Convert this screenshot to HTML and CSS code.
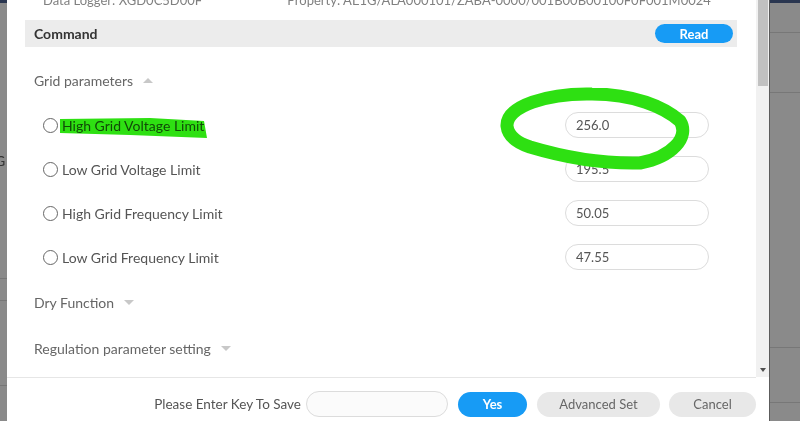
FILE: index.html
```html
<!DOCTYPE html>
<html lang="en">
<head>
  <meta charset="UTF-8" />
  <title>Command</title>
  <link rel="stylesheet" href="styles.css">
</head>
<body>

<div class="screen">
  <div class="shade shade-left">
    <div class="shade-top"></div>
    <div class="shade-gap" style="height:148px"></div>
    <span class="shade-letter">G</span>
    <div class="shade-gap" style="height:107px"></div>
    <div class="shade-line"></div>
    <div class="shade-gap" style="height:21px"></div>
    <div class="shade-line"></div>
    <div class="shade-gap" style="height:84px"></div>
    <div class="shade-line"></div>
  </div>

  <div class="dialog">
    <div class="dialog-main">
      <div class="content">
        <div class="info-row">
          <span>Data Logger: XGD0C5D00F</span>
          <span class="info-prop">Property: AE1G/ALA000101/ZABA-0000/001B00B00100F0F001M0024</span>
        </div>

        <div class="cmd-bar">
          <b>Command</b>
          <button class="btn btn-blue btn-read">Read</button>
        </div>

        <div class="section">Grid parameters <i class="caret caret-up"></i></div>

        <div class="param-row">
          <label><span class="radio"></span>High Grid Voltage Limit</label>
          <input class="pill-input" type="text" value="256.0" />
        </div>
        <div class="param-row">
          <label><span class="radio"></span>Low Grid Voltage Limit</label>
          <input class="pill-input" type="text" value="195.5" />
        </div>
        <div class="param-row">
          <label><span class="radio"></span>High Grid Frequency Limit</label>
          <input class="pill-input" type="text" value="50.05" />
        </div>
        <div class="param-row">
          <label><span class="radio"></span>Low Grid Frequency Limit</label>
          <input class="pill-input" type="text" value="47.55" />
        </div>

        <div class="section">Dry Function <i class="caret caret-down"></i></div>
        <div class="section">Regulation parameter setting <i class="caret caret-down"></i></div>
      </div>

      <div class="scrollbar">
        <div class="thumb"></div>
        <div class="arrow-down"></div>
      </div>
    </div>

    <div class="footer">
      <span class="key-label">Please Enter Key To Save</span>
      <input class="pill-input key-input" type="password" />
      <button class="btn btn-blue btn-yes">Yes</button>
      <button class="btn btn-gray btn-adv">Advanced Set</button>
      <button class="btn btn-gray btn-cancel">Cancel</button>
    </div>
  </div>

  <div class="shade shade-right">
    <div class="shade-top"></div>
    <div class="shade-gap" style="height:29px"></div>
    <div class="shade-line"></div>
    <div class="shade-gap" style="height:59px"></div>
    <div class="shade-line"></div>
    <div class="shade-gap" style="height:254px"></div>
    <div class="shade-line"></div>
    <div class="shade-gap" style="height:54px"></div>
    <div class="shade-line"></div>
  </div>

  <!-- hand drawn marker on top of the screenshot -->
  <svg class="marker" width="800" height="421" viewBox="0 0 800 421">
    <polygon class="marker-hl" points="60,119 150,118 204,121 207,138 130,135 60,133" />
    <path class="marker-ring" d="M 507 126 C 506 106, 548 93, 592 94 C 634 94, 664 107, 680 121 C 690 137, 672 157, 640 163 C 600 164, 560 156, 530 147 C 515 142, 508 135, 507 126 Z" />
  </svg>
</div>

</body>
</html>
```

FILE: styles.css
```css
* { box-sizing: border-box; }
body {
  margin: 0;
  overflow: hidden;
  font-family: Lato, 'Liberation Sans', sans-serif;
  font-size: 14px;
  color: #555;
}
.screen {
  position: relative;
  display: flex;
  width: 800px;
  height: 421px;
  background: #8a8a8a;
}

/* page behind the dialog */
.shade {
  display: flex;
  flex-direction: column;
  overflow: hidden;
  background: #8a8a8a;
}
.shade-left { width: 7px; }
.shade-right {
  flex: 1;
  border-left: 1px solid #5c5c5c;
}
.shade-top { height: 3px; background: #2a3650; }
.shade-line { height: 1px; background: #777; }
.shade-letter {
  margin-left: -5px;
  line-height: 20px;
  color: #333;
}

/* dialog */
.dialog {
  width: 762px;
  display: flex;
  flex-direction: column;
  background: #fff;
}
.dialog-main {
  display: flex;
  height: 378px;
}
.content {
  flex: 1;
  overflow: hidden;
  padding: 0 19px 0 18px;
  border-bottom: 1px solid #e6e6e6;
}
.info-row {
  display: flex;
  margin-top: -10px;
  padding-left: 18px;
  font-size: 13px;
  line-height: 20px;
  white-space: nowrap;
  color: #808080;
}
.info-row span { flex-shrink: 0; }
.info-prop { margin-left: 85px; }

.cmd-bar {
  display: flex;
  align-items: center;
  justify-content: space-between;
  height: 27px;
  margin-top: 10px;
  padding: 0 4px 0 9px;
  background: #ececec;
  color: #333;
}
.btn {
  border: none;
  border-radius: 13px;
  font-family: inherit;
  font-size: 13px;
  cursor: pointer;
}
.btn-blue {
  background: #179bf5;
  color: #fff;
  font-weight: bold;
}
.btn-gray {
  background: #e8e8e8;
  color: #666;
}
.btn-read {
  width: 78px;
  height: 19px;
  border-radius: 10px;
}

.section {
  display: flex;
  align-items: center;
  height: 46px;
  padding-left: 9px;
  color: #666;
}
.cmd-bar + .section { margin-top: 10px; }
.caret {
  width: 0;
  height: 0;
  margin-left: 10px;
  border-left: 5px solid transparent;
  border-right: 5px solid transparent;
}
.caret-up { border-bottom: 5px solid #c8c8c8; }
.caret-down { border-top: 5px solid #c8c8c8; }

.param-row {
  display: flex;
  align-items: center;
  justify-content: space-between;
  height: 44px;
  padding: 0 28px 0 18px;
}
.param-row label {
  display: flex;
  align-items: center;
}
.radio {
  width: 15px;
  height: 15px;
  margin-right: 4px;
  border: 1px solid #666;
  border-radius: 50%;
}
.pill-input {
  width: 144px;
  height: 26px;
  padding: 0 10px;
  border: 1px solid #dcdcdc;
  border-radius: 13px;
  font-family: inherit;
  font-size: 13px;
  color: #555;
  outline: none;
}

.scrollbar {
  display: flex;
  flex-direction: column;
  justify-content: space-between;
  align-items: center;
  width: 13px;
  height: 377px;
  padding: 0 1px 5px 2px;
  background: #f1f1f1;
}
.thumb {
  width: 100%;
  height: 86px;
  background: #c1c1c1;
}
.arrow-down {
  width: 0;
  height: 0;
  border-left: 3px solid transparent;
  border-right: 3px solid transparent;
  border-top: 4px solid #505050;
}

.footer {
  display: flex;
  align-items: center;
  justify-content: flex-end;
  gap: 10px;
  padding: 13px 13px 0 0;
}
.key-label { margin-right: -5px; font-size: 13.5px; }
.key-input { width: 142px; background: #fbfbfb; }
.footer .btn { height: 25px; }
.btn-yes { width: 69px; }
.btn-adv { width: 123px; }
.btn-cancel { width: 87px; margin-left: -1px; }

/* marker annotation */
.marker {
  position: absolute;
  left: 0;
  top: 0;
  pointer-events: none;
}
.marker-hl {
  fill: #2ee012;
  mix-blend-mode: multiply;
}
.marker-ring {
  fill: none;
  stroke: #2ee012;
  stroke-width: 13;
  stroke-linejoin: round;
}
```
